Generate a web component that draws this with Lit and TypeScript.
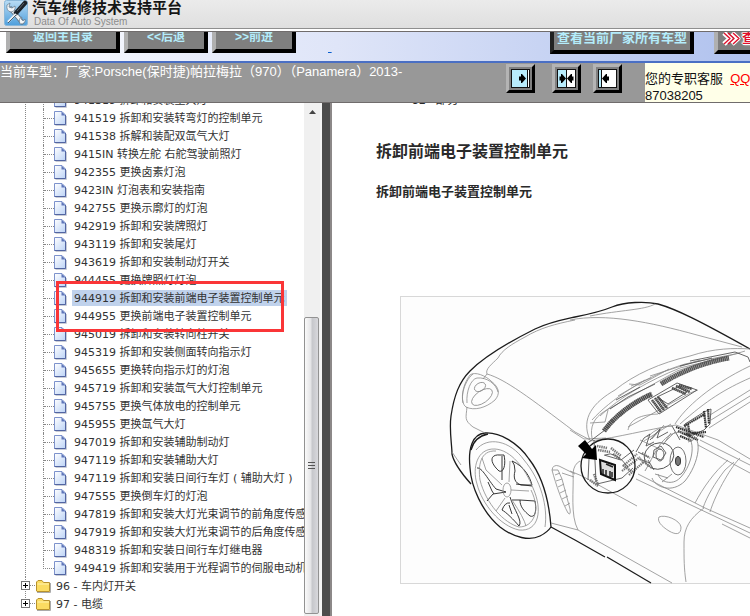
import { LitElement, html, css, svg, nothing } from "lit";
import { customElement, property } from "lit/decorators.js";
import { classMap } from "lit/directives/class-map.js";

interface Doc {
  code: string;
  title: string;
  selected?: boolean;
}

const DOCS: Doc[] = [
  { code: "941319", title: "拆卸和安装主大灯" },
  { code: "941519", title: "拆卸和安装转弯灯的控制单元" },
  { code: "941538", title: "拆解和装配双氙气大灯" },
  { code: "9415IN", title: "转换左舵 右舵驾驶前照灯" },
  { code: "942355", title: "更换卤素灯泡" },
  { code: "9423IN", title: "灯泡表和安装指南" },
  { code: "942755", title: "更换示廓灯的灯泡" },
  { code: "942919", title: "拆卸和安装牌照灯" },
  { code: "943119", title: "拆卸和安装尾灯" },
  { code: "943619", title: "拆卸和安装制动灯开关" },
  { code: "944455", title: "更换牌照灯灯泡" },
  { code: "944919", title: "拆卸和安装前端电子装置控制单元", selected: true },
  { code: "944955", title: "更换前端电子装置控制单元" },
  { code: "945019", title: "拆卸和安装转向柱开关" },
  { code: "945319", title: "拆卸和安装侧面转向指示灯" },
  { code: "945655", title: "更换转向指示灯的灯泡" },
  { code: "945719", title: "拆卸和安装氙气大灯控制单元" },
  { code: "945755", title: "更换气体放电的控制单元" },
  { code: "945955", title: "更换氙气大灯" },
  { code: "947019", title: "拆卸和安装辅助制动灯" },
  { code: "947119", title: "拆卸和安装辅助大灯" },
  { code: "947119", title: "拆卸和安装日间行车灯 ( 辅助大灯 )" },
  { code: "947555", title: "更换倒车灯的灯泡" },
  { code: "947819", title: "拆卸和安装大灯光束调节的前角度传感器" },
  { code: "947919", title: "拆卸和安装大灯光束调节的后角度传感器" },
  { code: "948319", title: "拆卸和安装日间行车灯继电器" },
  { code: "949419", title: "拆卸和安装用于光程调节的伺服电动机" },
];

const FOLDERS = ["96 - 车内灯开关", "97 - 电缆"];

@customElement("site-header")
class SiteHeader extends LitElement {
  static styles = css`
    :host {
      display: block;
      flex: none;
    }
    header {
      box-sizing: border-box;
      height: 32px;
      display: flex;
      gap: 4px;
      padding: 0 4px;
      overflow: hidden;
      background: linear-gradient(#ebebeb, #dfdfdf 28px, #8e8e8e 28px, #8e8e8e 29px, #fff 29px, #fff 31px, #706c6c 31px);
    }
    svg {
      flex: none;
      width: 24px;
      height: 26px;
    }
    h1 {
      margin: 0;
      font-size: 15px;
      line-height: 15px;
      font-weight: 700;
      color: #151515;
      white-space: nowrap;
    }
    p {
      margin: 0;
      padding-left: 2px;
      font-size: 10px;
      line-height: 14px;
      color: #8c8c8c;
    }
  `;
  render() {
    return html`<header>
      <svg viewBox="0 0 24 26" aria-hidden="true">
        <defs>
          <linearGradient id="tile" x1="0" y1="0" x2="0" y2="1">
            <stop offset="0" stop-color="#b9dcf4" />
            <stop offset="1" stop-color="#4f9fdc" />
          </linearGradient>
        </defs>
        <rect x="0.5" y="0.5" width="23" height="25" rx="2" fill="url(#tile)" stroke="#8ab8da" />
        <path d="M7 9 L18 22" stroke="#64798a" stroke-width="5" stroke-linecap="round" />
        <path d="M7 9 L18 22" stroke="#f1f5f8" stroke-width="3" stroke-linecap="round" />
        <path d="M3 5 Q2 11 7 12 Q12 11 11 6 L8 8 L5 7 L6 3 Z" fill="#f1f5f8" stroke="#64798a" stroke-width="0.7" />
        <path d="M16 24 Q22 24 21 19 L19 21 L17 19 L18 17 Q14 18 16 24" fill="#f1f5f8" stroke="#64798a" stroke-width="0.7" />
        <path d="M21 3 L12 13" stroke="#1c2228" stroke-width="4.5" stroke-linecap="round" />
        <path d="M20 3 L13 11" stroke="#68737c" stroke-width="0.8" />
        <path d="M12 14 L4 22" stroke="#eef2f5" stroke-width="2.4" />
        <path d="M12 15 L4 23" stroke="#3c4d5a" stroke-width="0.9" />
      </svg>
      <div>
        <h1>汽车维修技术支持平台</h1>
        <p>Data Of Auto System</p>
      </div>
    </header>`;
  }
}

@customElement("nav-strip")
class NavStrip extends LitElement {
  static styles = css`
    :host {
      display: block;
      flex: none;
    }
    nav {
      box-sizing: border-box;
      height: 31px;
      display: flex;
      align-items: flex-end;
      gap: 4px;
      padding: 0 0 8px 6px;
      overflow: hidden;
      background: linear-gradient(90deg, #fff, #e6ebfa 30%, #dfe5f8 45%, #b0c2ee);
      border-bottom: 2px solid #4a6fc4;
    }
    button {
      flex: none;
      box-sizing: border-box;
      height: 34px;
      padding: 2px 0 0;
      border: 4px solid;
      border-color: #b0b0b0 #000 #000 #b0b0b0;
      background: #7f7f7f;
      color: #b4ecfb;
      font: 700 12px/20px "Liberation Sans", "Noto Sans CJK SC", sans-serif;
      white-space: nowrap;
    }
    .home {
      width: 114px;
    }
    .step {
      width: 84px;
    }
    .all {
      width: 144px;
      border-left-color: #222;
      font-size: 13px;
    }
    .more {
      width: 114px;
      color: #e0102c;
      font-size: 13px;
      text-align: left;
      padding-left: 4px;
      text-shadow: 1px 0 #fff, -1px 0 #fff, 0 1px #fff, 0 -1px #fff, 1px 1px 2px #fff, -1px -1px 2px #fff;
    }
    .more svg {
      width: 20px;
      height: 15px;
      vertical-align: middle;
    }
    a {
      margin-left: 28px;
      color: #0a5fd0;
      font: 13px/13px "Liberation Sans", sans-serif;
    }
    .right {
      flex: none;
      display: flex;
      gap: 20px;
      width: 200px;
      margin-left: auto;
      margin-bottom: -1px;
    }
  `;
  render() {
    return html`<nav>
      <button class="home">返回主目录</button>
      <button class="step">&lt;&lt;后退</button>
      <button class="step">&gt;&gt;前进</button>
      <a href="#">&nbsp;</a>
      <div class="right">
        <button class="all">查看当前厂家所有车型</button>
        <button class="more">
          <svg viewBox="0 0 20 15" aria-hidden="true">
            <g fill="none" stroke-linejoin="round">
              <path d="M2 2 L8 7.5 L2 13 M10 2 L16 7.5 L10 13" stroke="#fff" stroke-width="5" />
              <path d="M2 2 L8 7.5 L2 13 M6 2 L12 7.5 L6 13 M11 2 L17 7.5 L11 13" stroke="#e0102c" stroke-width="1.4" />
            </g></svg>查看资料
        </button>
      </div>
    </nav>`;
  }
}

@customElement("vehicle-bar")
class VehicleBar extends LitElement {
  static styles = css`
    :host {
      display: flex;
      flex: none;
      height: 39px;
      overflow: hidden;
      background: #989898;
      border-bottom: 1px solid #706c6c;
      font: 13px/17px "Liberation Sans", "Noto Sans CJK SC", sans-serif;
    }
    p {
      flex: 1;
      margin: 0;
      color: #fff;
      white-space: nowrap;
    }
    .tools {
      flex: none;
      display: flex;
      gap: 17px;
      padding: 1px 23px 0 0;
    }
    button {
      box-sizing: border-box;
      width: 29px;
      height: 29px;
      padding: 2px;
      border: 3px solid;
      border-color: #b4b4b4 #000 #000 #b4b4b4;
      background: #808080;
    }
    button svg {
      display: block;
      width: 19px;
      height: 19px;
    }
    .last {
      margin-left: -5px;
    }
    .service {
      flex: none;
      box-sizing: border-box;
      width: 105px;
      padding-top: 7px;
      overflow: hidden;
      background: #ffffe8;
      color: #111;
      white-space: nowrap;
    }
    a {
      color: #f00;
    }
  `;
  render() {
    return html`<p>当前车型：厂家:Porsche(保时捷)帕拉梅拉（970）（Panamera）2013-</p>
      <div class="tools">
        <button aria-label="展开左栏">
          <svg viewBox="0 0 19 19">
            <rect x="0.5" y="0.5" width="18" height="18" fill="#fff" stroke="#111" />
            <rect x="1" y="1" width="15" height="17" fill="#b8ecfc" />
            <path d="M16.5 1 V18" stroke="#111" />
            <path d="M8 7.5 H10 V5 H11 L15 9.5 L11 14 H10 V11.5 H8 Z" />
          </svg>
        </button>
        <button aria-label="左右分栏">
          <svg viewBox="0 0 19 19">
            <rect x="0.5" y="0.5" width="18" height="18" fill="#fff" stroke="#111" />
            <rect x="1" y="1" width="8" height="17" fill="#b8ecfc" />
            <path d="M9.5 1 V18" stroke="#111" />
            <path d="M2.5 7.5 H4 V5 H5 L9 9.5 L5 14 H4 V11.5 H2.5 Z M16.5 7.5 H15 V5 H14 L10 9.5 L14 14 H15 V11.5 H16.5 Z" />
          </svg>
        </button>
        <button class="last" aria-label="展开右栏">
          <svg viewBox="0 0 19 19">
            <rect x="0.5" y="0.5" width="18" height="18" fill="#fff" stroke="#111" />
            <rect x="1" y="1" width="2" height="17" fill="#b8ecfc" />
            <path d="M3.5 1 V18" stroke="#111" />
            <path d="M11 7.5 H9 V5 H8 L4 9.5 L8 14 H9 V11.5 H11 Z" />
          </svg>
        </button>
      </div>
      <div class="service">您的专职客服&nbsp; <a href="#">QQ:</a><br />87038205</div>`;
  }
}

@customElement("doc-tree")
class DocTree extends LitElement {
  @property({ attribute: false }) docs: Doc[] = [];
  @property({ attribute: false }) folders: string[] = [];

  static styles = css`
    :host {
      display: flex;
      flex: none;
      width: 320px;
      overflow: hidden;
      font: 11px/18px "DejaVu Sans", "Noto Sans CJK SC", sans-serif;
      color: #333;
    }
    .view {
      flex: 1;
      min-width: 0;
      overflow: hidden;
    }
    ul {
      list-style: none;
      margin: 0;
      padding: 0;
    }
    .root {
      margin-top: -12px;
    }
    .branch {
      margin-left: 25px;
      border-left: 1px dotted #888;
      padding-left: 17px;
    }
    .doc {
      display: flex;
      align-items: center;
      height: 18px;
      white-space: nowrap;
    }
    .guide {
      flex: none;
      box-sizing: border-box;
      width: 11px;
      height: 18px;
      border-left: 1px dotted #888;
      display: flex;
      align-items: center;
    }
    .guide::before {
      content: "";
      flex: 1;
      border-top: 1px dotted #888;
    }
    .end .guide {
      height: 10px;
      align-self: flex-start;
      border-bottom: 1px dotted #888;
    }
    .end .guide::before {
      display: none;
    }
    .doc svg {
      flex: none;
      width: 13px;
      height: 15px;
      margin-right: 5px;
    }
    a {
      color: inherit;
      text-decoration: none;
      line-height: 14px;
      padding: 2px 2px 0;
    }
    .selected a {
      background: #c0d2ec;
    }
    .selected {
      position: relative;
    }
    .mark {
      position: absolute;
      left: 13px;
      top: -8px;
      box-sizing: border-box;
      width: 228px;
      height: 51px;
      border: 3px solid #fa3537;
      pointer-events: none;
      z-index: 1;
    }
    .folder {
      display: flex;
      align-items: center;
      height: 18px;
      padding-left: 21px;
      white-space: nowrap;
    }
    .folder svg {
      flex: none;
      width: 30px;
      height: 18px;
      margin-right: 3px;
    }
    .bar {
      flex: none;
      box-sizing: border-box;
      width: 16px;
      display: flex;
      flex-direction: column;
      background: #f0f0f0;
    }
    .bar svg {
      width: 16px;
      height: 17px;
      flex: none;
    }
    .track {
      flex: 199;
    }
    .thumb {
      flex: 297;
      box-sizing: border-box;
      width: 15px;
      margin-bottom: 2px;
      border: 1px solid #929292;
      border-radius: 2px;
      background: linear-gradient(90deg, #fafafa, #e4e4e6 45%, #c6c7cb 55%, #d8d8dc);
      display: flex;
      align-items: center;
      justify-content: center;
    }
    .thumb svg {
      width: 7px;
      height: 8px;
    }
  `;

  private renderDoc(doc: Doc, last: boolean) {
    return html`<li class=${classMap({ doc: true, selected: !!doc.selected, end: last })}>
      <span class="guide"></span>
      <svg viewBox="0 0 13 15" aria-hidden="true">
        <defs>
          <linearGradient id="paper" x1="0" y1="0" x2="1" y2="1">
            <stop offset="0" stop-color="#fff" />
            <stop offset="1" stop-color="#bcd3f6" />
          </linearGradient>
        </defs>
        <path d="M1.5 14.5 H12.5 V5" fill="none" stroke="#c8ccd6" />
        <path d="M0.5 0.5 H8 L11.5 4 V13.5 H0.5 Z" fill="url(#paper)" stroke="#7d92cc" />
        <path d="M0.5 13.5 H11.5 V4" fill="none" stroke="#5265a2" />
        <path d="M7.5 0.5 V4.5 H11.5 Z" fill="#5f76b9" />
      </svg>
      <a href="#">${doc.code} ${doc.title}</a>
      ${doc.selected ? html`<span class="mark"></span>` : nothing}
    </li>`;
  }

  private renderFolder(name: string, last: boolean) {
    const trunk = svg`<path d=${last ? "M4.5 0 V4" : "M4.5 0 V18"} stroke="#888" stroke-dasharray="1 1" />`;
    return html`<li class="folder">
      <svg viewBox="0 0 30 18" aria-hidden="true">
        ${trunk}
        <path d="M9 8.5 H15" stroke="#888" stroke-dasharray="1 1" />
        <rect x="0.5" y="4.5" width="8" height="8" fill="#fff" stroke="#777" />
        <path d="M2 8.5 H7 M4.5 6 V11" stroke="#000" />
        <path d="M16 15.5 H29.5 V6" fill="none" stroke="#aaa" />
        <path d="M15.5 14 V5 L17 3.5 H21 L22.5 5.5 H28.5 V14.5 H16 Z" fill="#fbdc62" stroke="#b8922c" />
        <path d="M16.5 7 H28" stroke="#fff3b0" />
      </svg>
      <a href="#">${name}</a>
    </li>`;
  }

  render() {
    return html`<div class="view">
        <ul class="root">
          <li>
            <ul class="branch">
              ${this.docs.map((d, i) => this.renderDoc(d, i === this.docs.length - 1))}
            </ul>
          </li>
          ${this.folders.map((name, i) => this.renderFolder(name, i === this.folders.length - 1))}
        </ul>
      </div>
      <div class="bar">
        <svg viewBox="0 0 16 17" aria-hidden="true"><path d="M5 11 L8.5 7 L12 11 Z" fill="#444" /></svg>
        <div class="track"></div>
        <div class="thumb">
          <svg viewBox="0 0 7 8" aria-hidden="true"><path d="M0 0.5 H7 M0 3.5 H7 M0 6.5 H7" stroke="#555" /></svg>
        </div>
      </div>`;
  }
}

@customElement("car-figure")
class CarFigure extends LitElement {
  static styles = css`
    :host {
      display: block;
    }
    svg {
      display: block;
      width: 440px;
      height: 288px;
    }
    .thin {
      fill: none;
      stroke: #8c8c8c;
      stroke-width: 0.8;
    }
    .mid {
      fill: none;
      stroke: #555;
      stroke-width: 0.9;
    }
    .bold {
      fill: none;
      stroke: #1c1c1c;
      stroke-width: 1.3;
    }
  `;
  render() {
    return html`<svg viewBox="400 296 440 288" role="img" aria-label="前端电子装置控制单元">
      <rect x="400.5" y="296.5" width="439" height="287" fill="#fdfdfd" stroke="#d8d8d8" />
      <g class="bold">
        <path d="M471 484 C463 475 454 464 452 454 C452 445 449 430 451 416 C454 396 459 382 470 371 C486 355 513 340 535 329 C550 322 566 319 575 317 C590 314 600 312 612 307 C625 302 645 301 658 304 C676 309 700 321 750 349" />
        <path d="M485 433 C472 434 468 449 470 468 C471 486 482 512 500 527 C514 538 530 541 540 536 C546 533 549 530 551 527 C549 500 543 477 529 459 C518 443 500 432 485 433 Z" />
        <path d="M471 450 C473 442 478 436 488 434" />
        <path d="M551 527 L575 540 L605 557" />
        <path d="M607 557 L651 583" />
      </g>
      <g class="mid">
        <path d="M500 455 C490 454 489 462 499 471 C504 473 506 464 504 455 Z" stroke="#222" />
        <path d="M512 461 C524 466 530 477 532 485 L521 485 C515 483 513 478 515 471 Q515 464 512 461" stroke="#222" />
        <path d="M520 500 L535 501 C537 511 535 518 530 516 C524 511 520 507 520 500" stroke="#222" />
        <path d="M477 468 C482 467 488 480 496 489 L506 492 L493 494 L487 501 M488 482 L492 491 L494 494" stroke="#222" />
        <path d="M510 497 C514 510 523 521 519 526 C514 520 506 512 502 510 Q505 502 510 503 M509 505 L512 514" stroke="#222" />
        <path d="M502 456 L502 480 M512 500 L520 500 M516 484 L532 486" stroke="#222" />
      </g>
      <g class="thin">
        <path d="M575 320 C555 324 540 328 525 337 C512 344 502 350 498 358 C492 364 485 369 487 374 L483 379" />
        <path d="M487 374 C505 379 530 398 575 432 L590 440" />
        <path d="M463 403 C461 394 464 383 470 375 C475 371 486 376 491 381 C500 388 500 394 495 400 C486 408 474 411 466 407 C459 402 463 382 473 374" />
        <path d="M467 403 C466 391 471 379 477 378 C487 377 496 384 498 392" />
        <ellipse cx="480" cy="387" rx="6" ry="4" transform="rotate(-30 480 387)" />
        <ellipse cx="482" cy="397" rx="12" ry="6" transform="rotate(-35 482 397)" />
        <path d="M467 407 C466 418 464 420 473 427 L485 433 M452 452 L461 465" />
        <path d="M476 450 C487 436 510 440 524 460 C541 480 548 507 545 527" />
        <path d="M495 449 C477 448 472 468 477 484 C482 504 500 526 519 530 C539 532 543 510 533 488 C525 468 511 450 495 449" />
        <path d="M496 451 C480 450 478 466 480 480 C486 504 504 523 519 527 C534 527 541 510 531 490" />
        <ellipse cx="507" cy="490" rx="4" ry="7" />
        <path d="M482 458 L486 470 L502 485 M510 461 L509 482 M511 490 L529 491 M512 500 Q524 518 526 526 M505 498 L496 511" />
        <path d="M551 523 L578 530 L672 583 M578 530 C570 515 574 490 573 473 Q574 464 580 461" />
        <path d="M570 471 L582 476 L637 506" />
        <path d="M552 470 Q553 464 559 466 L575 474 M552 470 C556 485 562 502 568 513 Q571 516 570 509 L562 479 L558 470 L552 470 M562 473 L574 477 M555 475 L560 473 M556 481 L562 479 M558 487 L564 484 M560 493 L566 490 M562 499 L568 496 M565 506 L570 503" />
        <path d="M659 517 C665 514 680 520 681 527 C681 535 676 535 669 531 C661 526 657 521 659 517" />
        <path d="M570 320 C605 313 650 322 697 335 L742 347 M590 316 C620 310 645 310 655 304" />
        <path d="M590 440 C580 418 594 402 615 390 C635 374 660 363 690 356 C714 348 735 348 750 349" />
        <path d="M570 430 L584 439 L606 438 M592 438 C590 428 593 418 605 411 L677 371 C700 363 730 356 745 351" />
        <path d="M592 420 C610 400 645 376 685 364 L740 353 M590 423 L605 422 L608 410 M629 384 L640 385 L669 369 M631 386 L651 378" />
        <path d="M600 416 C620 397 650 380 680 368 L725 357 M618 396 L645 380 M650 376 L700 360" />
        <path d="M658 414 C635 415 630 422 628 430 M628 427 L690 393 L698 390" />
        <path d="M675 424 C685 408 710 385 750 366 M710 415 L750 390 M709 428 L750 402 M711 420 L750 396 M680 424 C707 400 725 389 750 378" />
        <path d="M590 441 C620 437 645 430 676 425 L718 440 L750 459 M700 440 L750 465 M698 445 L750 473" />
        <path d="M638 474 L705 508 L750 528 M636 479 L750 533 M722 524 L750 538" />
        <path d="M728 460 C714 472 703 488 695 503 M734 462 L725 470 C715 483 707 496 703 508 M740 458 C733 464 716 492 710 512" />
        <path d="M704 508 C690 518 684 528 684 542 C684 560 684 568 686 582" />
        <path d="M671 424 L644 441 M664 425 L652 439 M675 432 L665 442 M647 437 Q660 425 672 426 M640 440 L662 450" />
      </g>
      <path d="M604 431 C614 417 633 402 652 394" stroke="#4a4a4a" stroke-width="5" stroke-dasharray="1.6 0.3" fill="none" />
      <path d="M661 384 C680 372 705 362 729 358" stroke="#555" stroke-width="5" stroke-dasharray="1.6 0.3" fill="none" />
      <g class="mid">
        <path d="M648 400 L677 383 L697 390 L659 414 Z M657 397 L678 387 L687 392 L668 404 Z" />
        <path d="M610 409 L628 397 L655 384 M616 400 L640 387 M690 361 L735 352 M680 366 L712 358 M735 352 L748 357 L750 362" />
        <path d="M636 452 L644 438 L650 434 L646 446 L654 442 M650 440 L660 429 L657 438 L668 432 M672 426 L680 440" />
      </g>
      <path d="M652 400 L661 412 M655 398 L664 410 M658 397 L667 408 M672 388 L686 394 M676 386 L690 392 M679 385 L692 389" stroke="#4a4a4a" stroke-width="2.6" stroke-dasharray="1.6 0.3" />
      <path d="M685 424 L704 412 L711 409 L710 424 L704 430 L688 437 Z" class="mid" />
      <path d="M704 411 L706 428 M708 409 L709 424 M684 426 L705 414 M684 434 L706 432 M676 427 L704 437 M678 431 L698 440 M680 436 L692 441 M688 424 L690 437" stroke="#333" stroke-width="2.2" stroke-dasharray="1.6 0.5" />
      <g class="mid">
        <ellipse cx="659" cy="456" rx="15" ry="13" transform="rotate(-20 659 456)" />
        <ellipse cx="678" cy="461" rx="8" ry="14" stroke="#666" />
        <path d="M645 471 C657 450 663 431 684 432 C707 433 698 465 685 481 C672 494 655 487 652 478 M663 445 L671 433 M688 442 C699 438 698 435 698 435" stroke="#8a8a8a" />
        <path d="M688 436 C697 446 690 468 680 478 C672 486 660 482 658 474 M655 474 L668 478 M662 482 L672 474" stroke="#8a8a8a" />
        <path d="M654 450 L661 446 L666 453 L661 460 L653 457 Z M648 460 L654 470 M638 452 L648 457 M639 459 L650 463" />
        <ellipse cx="660" cy="455" rx="4" ry="6" />
        <ellipse cx="678" cy="461" rx="2.5" ry="4.5" fill="#777" stroke="#222" />
      </g>
      <path d="M622 471 L640 457 M623 466 L637 454 M629 475 L646 460 M640 459 L652 468 M642 453 L650 458" stroke="#777" stroke-width="2.2" stroke-dasharray="1.4 0.8" />
      <circle cx="608" cy="466" r="27" class="bold" />
      <path d="M597 446 L607 448 M598 450 L610 452 M611 448 L621 456 M613 454 L620 459 M623 465 L632 472 M590 480 L598 486 M594 474 L598 485" stroke="#777" stroke-width="2.6" stroke-dasharray="1.4 0.8" />
      <path d="M594 440 L596 482 M604 455 L621 460 L634 450 M597 484 L622 478 L633 468 M605 455 Q615 450 628 467 M585 445 L605 430 M589 459 L588 480" class="mid" />
      <path d="M600 460 L615 465 V480 L601 474 Z" fill="#ddd" stroke="#111" stroke-width="2" />
      <path d="M603 469 V474 M606 470 V475 M610 471 V477 M612 472 V477 M606 464 L613 467" stroke="#222" stroke-width="1.5" />
      <path d="M578 446 L585 440 L592 449 L596 445 L597 460 L582 458 L586 454 Z" fill="#000" />
    </svg>`;
  }
}

@customElement("app-root")
class AppRoot extends LitElement {
  static styles = css`
    :host {
      display: flex;
      flex-direction: column;
      height: 100vh;
      overflow: hidden;
      background: #fff;
      font-family: "Liberation Sans", "Noto Sans CJK SC", sans-serif;
    }
    .frames {
      flex: 1;
      min-height: 0;
      display: flex;
    }
    .splitter {
      flex: none;
      box-sizing: border-box;
      width: 12px;
      border: solid;
      border-width: 0 2px;
      border-color: #fff #8c8888 #fff #f4f4f4;
      background: #4c4c4c;
    }
    main {
      flex: 1;
      min-width: 0;
      overflow: hidden;
      padding-left: 44px;
      color: #2a2a2a;
    }
    .section {
      margin: -11px 0 0;
      padding-left: 36px;
      font-size: 12px;
      line-height: 16px;
    }
    h2 {
      margin: 34px 0 0;
      font-size: 16px;
      line-height: 20px;
      white-space: nowrap;
    }
    h3 {
      margin: 20px 0 0;
      font-size: 13px;
      line-height: 20px;
      white-space: nowrap;
    }
    car-figure {
      margin: 94px 0 0 24px;
    }
  `;
  render() {
    return html`<site-header></site-header>
      <nav-strip></nav-strip>
      <vehicle-bar></vehicle-bar>
      <div class="frames">
        <doc-tree .docs=${DOCS} .folders=${FOLDERS}></doc-tree>
        <div class="splitter"></div>
        <main>
          <p class="section">31 &nbsp; 部分</p>
          <h2>拆卸前端电子装置控制单元</h2>
          <h3>拆卸前端电子装置控制单元</h3>
          <car-figure></car-figure>
        </main>
      </div>`;
  }
}
